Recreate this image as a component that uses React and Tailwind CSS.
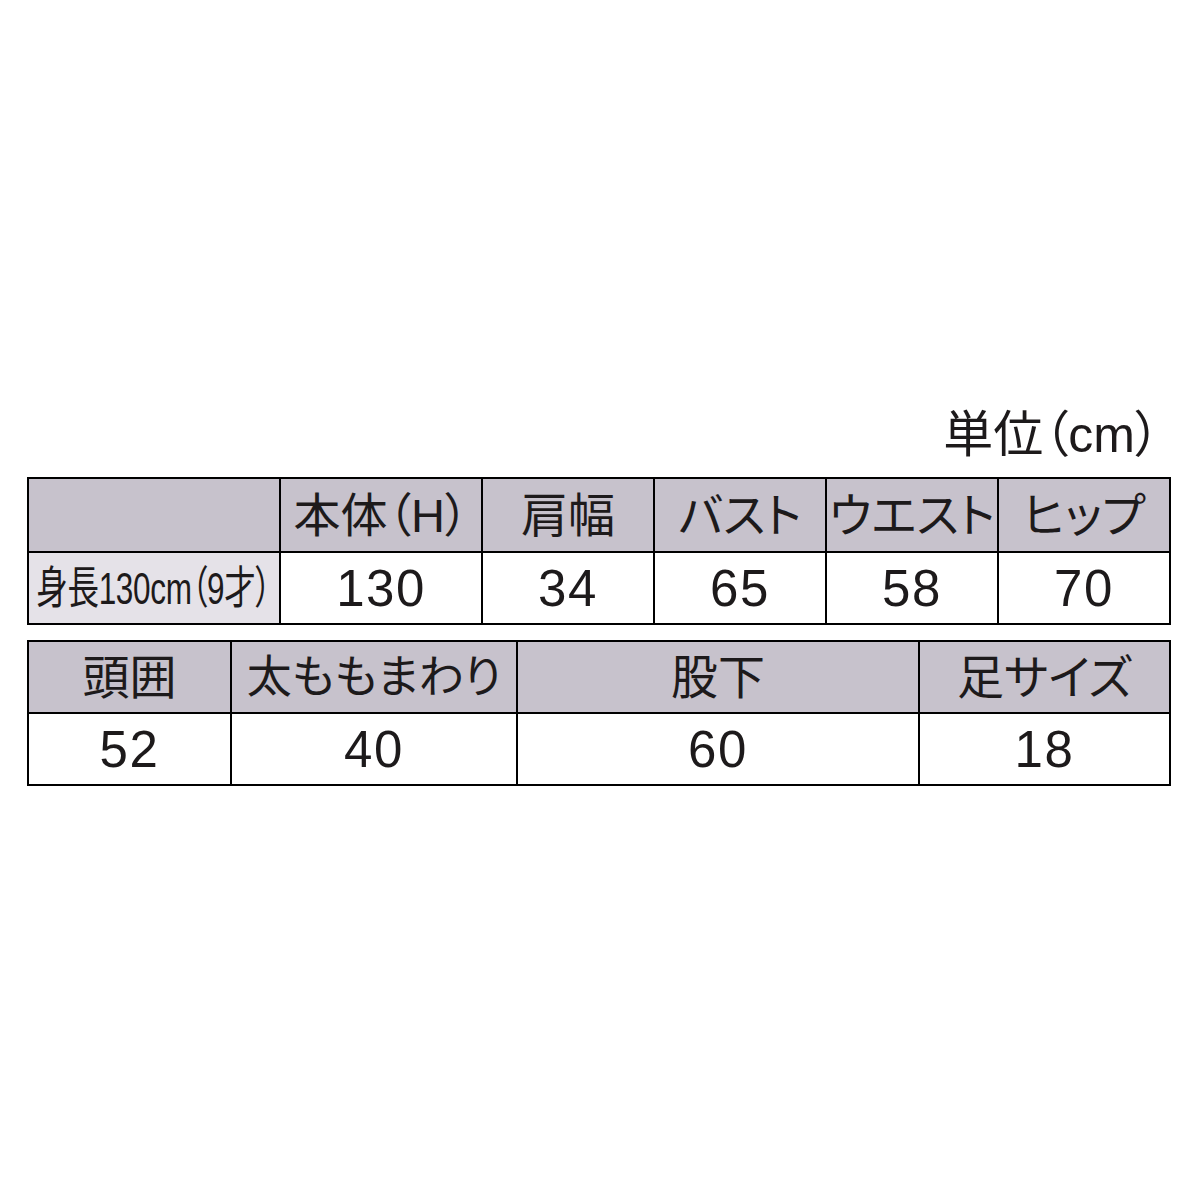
const font = {
  fontFamily: '"Liberation Sans", "Noto Sans CJK JP", sans-serif',
  fontFeatureSettings: '"palt"',
};

function Cell({ children, head, shade, first, top, className = "" }) {
  return (
    <div
      className={
        "flex items-center justify-center overflow-visible whitespace-nowrap text-[#1d1a1b] " +
        (first ? "" : "border-l-2 border-black ") +
        (top ? "" : "border-t-2 border-black ") +
        (head ? "bg-[#c7c2cc] " : shade ? "bg-[#e5e2e8] " : "bg-white ") +
        className
      }
    >
      {children}
    </div>
  );
}

const Head = ({ children }) => (
  <span className="text-[47px] leading-none">{children}</span>
);
const Num = ({ children }) => (
  <span className="text-[51px] leading-none tracking-[0.03em]">{children}</span>
);

export default function App() {
  return (
    <div className="w-[1200px] h-[1200px] bg-white" style={font}>
      <div className="pt-[410px] pl-[27px]">
        <div className="w-[1144px] flex justify-end pr-[11px] h-[67px]">
          <span className="text-[50px] leading-none text-[#1d1a1b]">単位（cm）</span>
        </div>

        <div className="w-[1144px] border-2 border-black grid grid-cols-[250px_202px_172px_172px_172px_172px] grid-rows-[72px_72px]">
          <Cell head first top />
          <Cell head top><Head>本体（H）</Head></Cell>
          <Cell head top><Head>肩幅</Head></Cell>
          <Cell head top><Head>バスト</Head></Cell>
          <Cell head top><Head>ウエスト</Head></Cell>
          <Cell head top><Head>ヒップ</Head></Cell>

          <Cell shade first>
            <span className="inline-block text-[45px] leading-none scale-x-[0.7] origin-center tracking-[-0.01em]">
              身長130cm（9才）
            </span>
          </Cell>
          <Cell><Num>130</Num></Cell>
          <Cell><Num>34</Num></Cell>
          <Cell><Num>65</Num></Cell>
          <Cell><Num>58</Num></Cell>
          <Cell><Num>70</Num></Cell>
        </div>

        <div className="mt-[15px] w-[1144px] border-2 border-black grid grid-cols-[201px_286px_402px_251px] grid-rows-[70px_72px]">
          <Cell head first top><Head>頭囲</Head></Cell>
          <Cell head top><span className="text-[45px] leading-none">太ももまわり</span></Cell>
          <Cell head top><Head>股下</Head></Cell>
          <Cell head top><Head>足サイズ</Head></Cell>

          <Cell first><Num>52</Num></Cell>
          <Cell><Num>40</Num></Cell>
          <Cell><Num>60</Num></Cell>
          <Cell><Num>18</Num></Cell>
        </div>
      </div>
    </div>
  );
}
